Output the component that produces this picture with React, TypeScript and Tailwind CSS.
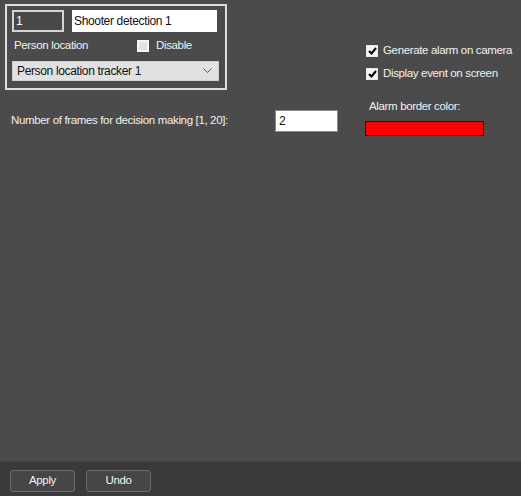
import React from 'react'

function Check({ checked }: { checked?: boolean }) {
  return (
    <span className="flex h-[12px] w-[12px] shrink-0 items-center justify-center border border-[#e8e8e8] bg-[#f4f4f4]">
      {checked && (
        <svg width="9" height="8" viewBox="0 0 9 8">
          <path d="M1 4 L3.5 6.5 L8 1" fill="none" stroke="#000" strokeWidth="2" />
        </svg>
      )}
    </span>
  )
}

export default function App() {
  const font = { fontFamily: '"Liberation Sans", Arial, sans-serif' }

  return (
    <div className="flex h-[496px] w-[521px] flex-col whitespace-nowrap bg-[#4b4b4b] text-[11.5px] leading-none tracking-[-0.35px] text-[#f0f0f0]" style={font}>
      <div className="flex flex-1">
        {/* left column */}
        <div className="w-[360px] shrink-0 pl-[5px] pt-[4px]">
          <div className="h-[86px] w-[222px] border-2 border-[#dcdcdc] px-[5px] pt-[4px]">
            <div className="flex gap-[8px]">
              <div className="flex h-[22px] w-[52px] items-center border-2 border-[#d4d4d4] bg-[#484848] px-[2px] text-[12px] text-white">1</div>
              <div className="flex h-[22px] w-[145px] items-center bg-white px-[2px] text-[12px] text-[#111]">Shooter detection 1</div>
            </div>
            <div className="mt-[8px] flex h-[12px] items-center">
              <span className="ml-[2px] w-[123px]">Person location</span>
              <span className="h-[12px] w-[12px] border-2 border-[#f6f6f6] bg-[#e2e2e2]" />
              <span className="ml-[7px]">Disable</span>
            </div>
            <div className="mt-[9px] flex h-[20px] w-[207px] items-center justify-between border border-[#cfcfcf] bg-[#e1e1e1] pl-[4px] pr-[6px] text-[12px] text-[#111]">
              <span>Person location tracker 1</span>
              <svg width="9" height="6" viewBox="0 0 9 6">
                <path d="M0.5 0.5 L4.5 4.5 L8.5 0.5" fill="none" stroke="#555" strokeWidth="1" />
              </svg>
            </div>
          </div>
          <div className="mt-[20px] flex items-center">
            <span className="ml-[6px] w-[264px]">Number of frames for decision making [1, 20]:</span>
            <div className="flex h-[22px] w-[63px] items-center border border-[#8a8a8a] bg-white px-[3px] text-[12px] text-[#111]">2</div>
          </div>
        </div>

        {/* right column */}
        <div className="pl-[5px] pt-[45px]">
          <div className="flex items-center gap-[5px] pl-[1px]">
            <Check checked />
            <span>Generate alarm on camera</span>
          </div>
          <div className="mt-[11px] flex items-center gap-[5px] pl-[1px]">
            <Check checked />
            <span>Display event on screen</span>
          </div>
          <div className="mt-[21px] pl-[4px]">Alarm border color:</div>
          <div className="mt-[8px] h-[15px] w-[119px] border border-[#1a1a1a] bg-[#ff0000]" />
        </div>
      </div>

      {/* bottom bar */}
      <div className="flex h-[35px] gap-[11px] border-t border-[#444] bg-[#3a3a3a] pl-[10px] pt-[8px]">
        <button className="h-[22px] w-[65px] rounded-[3px] border border-[#6b6b6b] bg-[#464646] text-[#f2f2f2]">Apply</button>
        <button className="h-[22px] w-[65px] rounded-[3px] border border-[#6b6b6b] bg-[#464646] text-[#f2f2f2]">Undo</button>
      </div>
    </div>
  )
}
